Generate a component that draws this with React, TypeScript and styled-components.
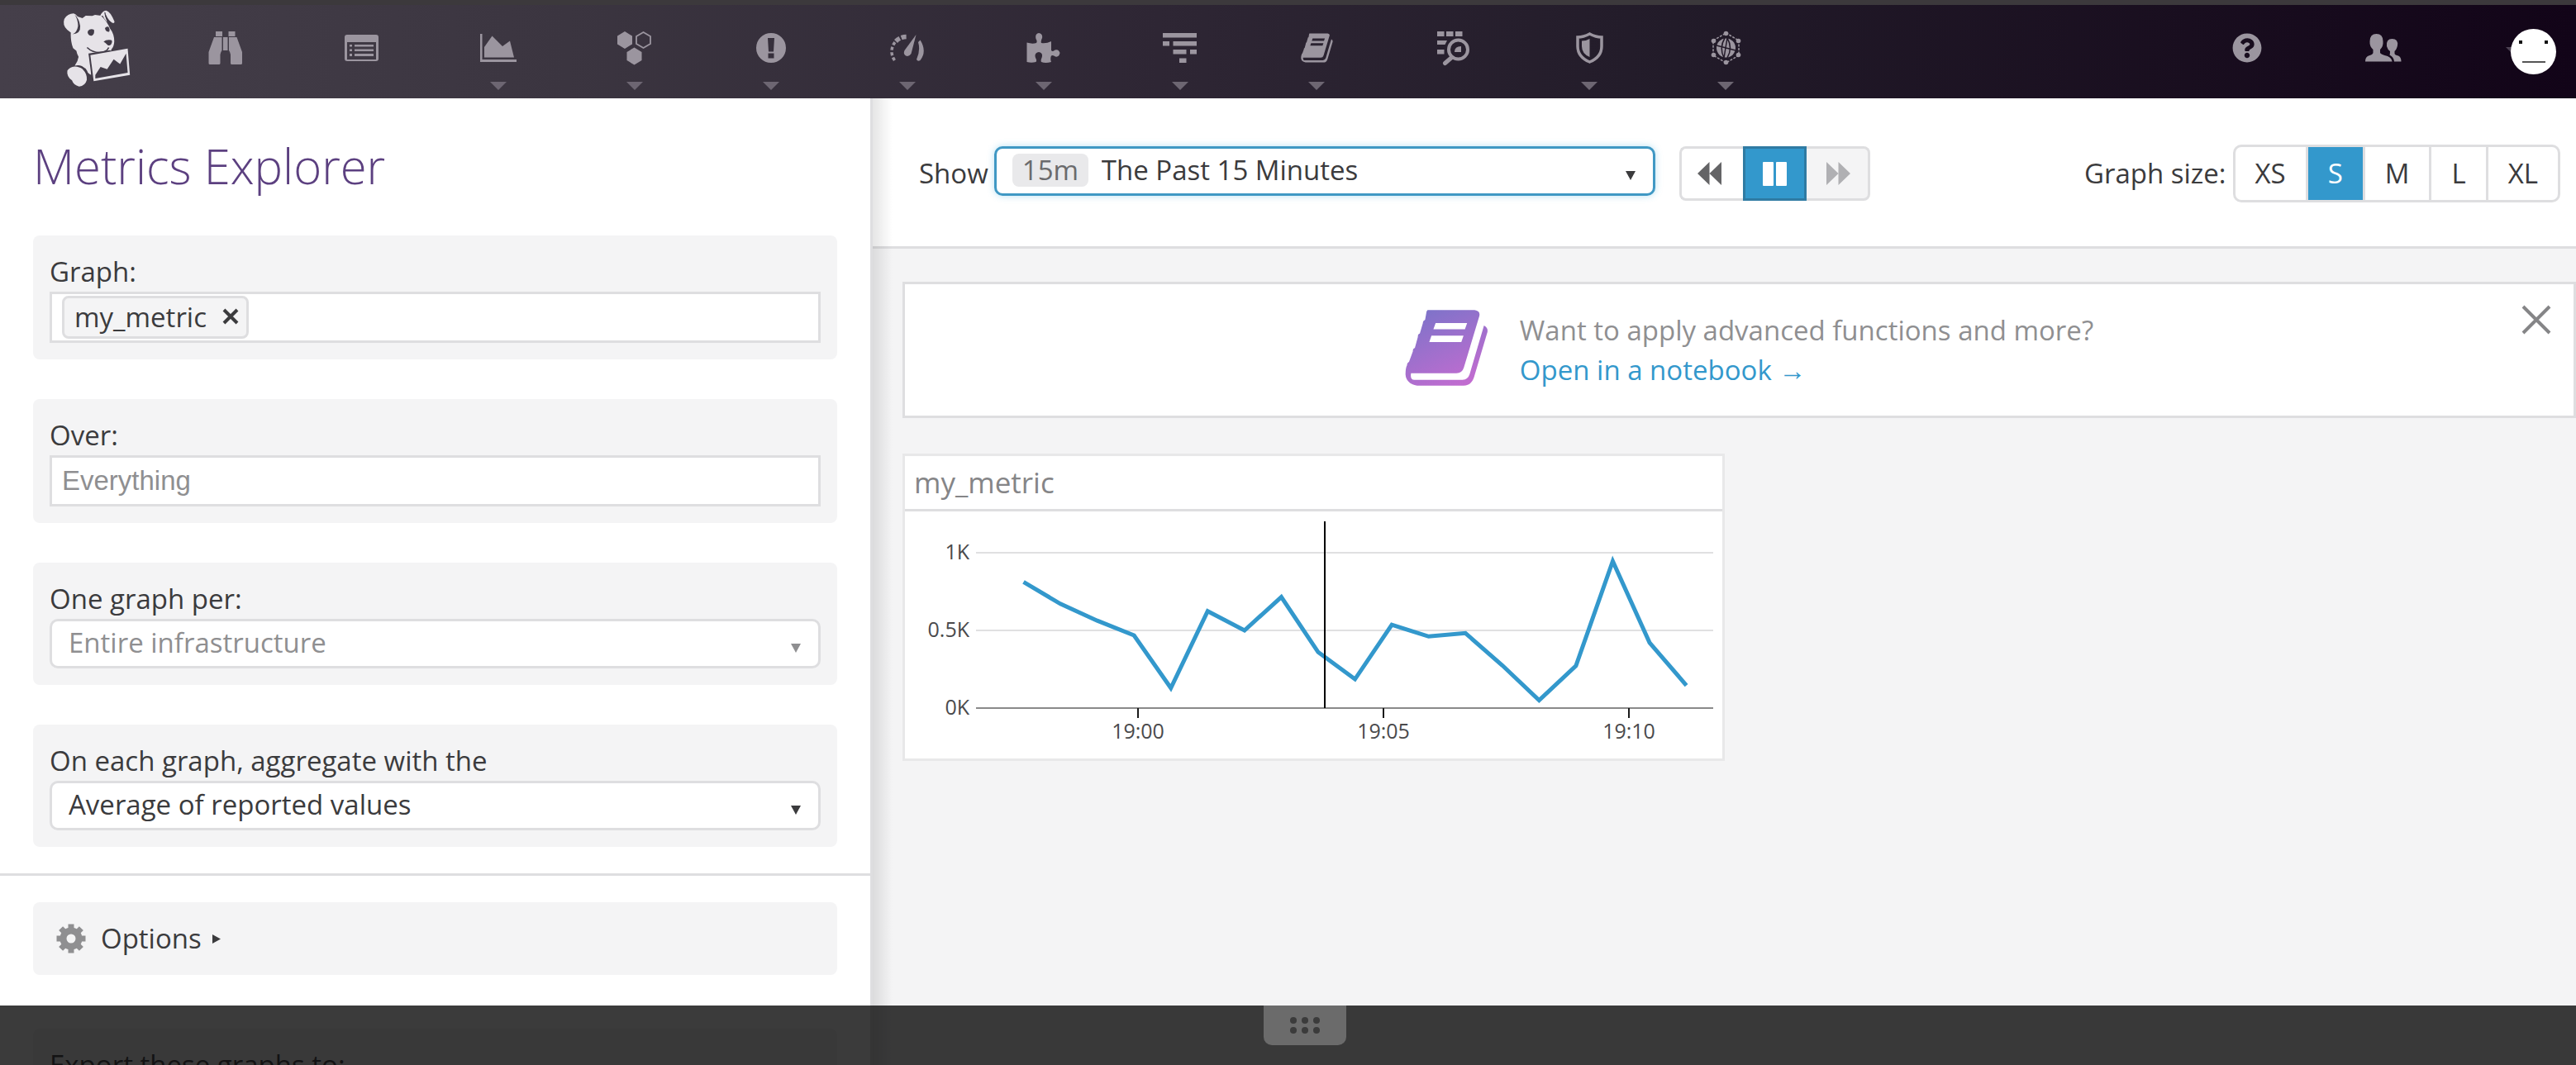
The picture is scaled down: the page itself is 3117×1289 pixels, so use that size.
import React, { useState } from 'react';
import styled, { createGlobalStyle, css } from 'styled-components';
import { FaQuestionCircle } from 'react-icons/fa';

const color = {
  text: '#3b3b3d',
  muted: '#8f8f91',
  line: '#dedee0',
  panel: '#f4f4f5',
  blue: '#3398cc',
  blueDark: '#2f7ba3',
  purple: '#5c4080',
  icon: '#9b959f',
  nav: '#423c48',
};

const GlobalStyle = createGlobalStyle`
  *, *::before, *::after { box-sizing: border-box; }
  body { margin: 0; }
  body, button, input, select {
    font-family: "Open Sans", "Noto Sans", sans-serif;
    font-size: 33px;
    line-height: 48px;
    color: ${color.text};
  }
  button { padding: 0; border: 0; background: none; cursor: pointer; }
  svg { display: block; }
`;

const Page = styled.div`
  display: flex;
  flex-direction: column;
  height: 100vh;
  overflow: hidden;
  background: ${color.panel};
`;

/* ---------- top navigation ---------- */

const Header = styled.header`
  display: flex;
  flex: none;
  align-items: flex-start;
  height: 119px;
  padding: 0 24px 0 76px;
  border-top: 6px solid #3c393c;
  background: linear-gradient(90deg, #453f4a 0%, #3b3540 22%, #2e2634 45%, #221b29 65%, #190e1f 85%, #120418 100%) border-box;
`;

const Logo = styled.a`
  margin: 6px 32px 0 0;
`;

const Nav = styled.nav`
  display: flex;
  flex: 1;
`;

const NavButton = styled.button`
  display: flex;
  flex-direction: column;
  align-items: center;
  gap: 19px;
  width: 165px;
  height: 113px;
  padding-top: 30px;
  color: ${color.icon};
`;

const NavCaret = styled.svg`
  fill: #6d6672;
`;

const Avatar = styled.button`
  margin: 29px 0 0 72px;
`;

const Icon = ({ children }: { children: React.ReactNode }) => (
  <svg width="44" height="44" viewBox="0 0 44 44" fill="currentColor" aria-hidden="true">{children}</svg>
);

const BinocularHalf = 'M8 9H17.5V25Q16 27 15.5 30V40.500Q15.500 42 14 42H3Q1.500 42 1.500 40.500V27Z';

const Binoculars = () => (
  <Icon>
    <path d="M10 2h8v6h-8zM25.500 2h8v6h-8zM19 9h5.500v16h-5.500z" />
    <path d={BinocularHalf} />
    <path d={BinocularHalf} transform="matrix(-1 0 0 1 43.500 0)" />
  </Icon>
);

const ListIcon = () => (
  <Icon>
    <path fillRule="evenodd" d="M4 6H39Q42 6 42 9V35Q42 38 39 38H4Q1 38 1 35V9Q1 6 4 6ZM4 15V36H39V15Z" />
    <path d="M7 18h3v2.500h-3zM13 18h23v2.500h-23zM7 23.500h3v2.500h-3zM13 23.500h23v2.500h-23zM7 29h3v3h-3zM13 29h23v3h-23z" />
  </Icon>
);

const AreaIcon = () => (
  <Icon>
    <path d="M0 5H2.500V36H44V39H0ZM5 33.500V21L14.500 7.500L27 20L36 13.500L41 33.500Z" />
  </Icon>
);

const HexIcon = () => (
  <Icon>
    <path d="M10 2L19 7.500V17.500L10 23L1 17.500V7.500ZM21.500 21.500L30.500 27V37L21.500 42.500L12.500 37V27Z" />
    <path d="M32.500 3L41 8V17L32.500 22L24 17V8Z" fill="none" stroke="currentColor" strokeWidth="1.800" />
  </Icon>
);

const AlertIcon = () => (
  <Icon>
    <path fillRule="evenodd" d="M22 4A18 18 0 1 0 22 40A18 18 0 1 0 22 4ZM18 10H26L25 26.500H19ZM18.500 28.500H25.500V34.500H18.500Z" />
  </Icon>
);

const GaugeIcon = () => (
  <Icon>
    <path d="M6.500 37A18 18 0 0 1 7 15" fill="none" stroke="currentColor" strokeWidth="3.500" strokeDasharray="4 2.500" />
    <path d="M8 14A18 18 0 0 1 22.500 8.500" fill="none" stroke="currentColor" strokeWidth="5.500" strokeDasharray="6 2" />
    <path d="M35 15L37.500 12.500Q46 26 37.500 37Q34.500 39 33 36Q38 25 35 15Z" />
    <path d="M32.500 6L26.500 29Q24 33 20 31.500Q16.500 29 18.500 25Z" />
  </Icon>
);

const PuzzleIcon = () => (
  <Icon>
    <path d="M1.500 15.500Q8 17.500 13 16Q14.500 14 12.500 11Q11 5 16 4Q21 5 20 10Q18 14 19 16Q25 17 31 14V25Q33 27 35.500 24.500Q40 23 41.500 28Q40.500 33.500 36 32.500Q33 30 31 31.500Q29.500 35 31 39Q24 41 19 39Q18 37 19.500 34Q21.500 28 16 27Q10 28 12 34Q14 37 12.500 39Q7 40.500 1.500 39Z" />
  </Icon>
);

const FilterIcon = () => (
  <Icon>
    <path d="M1 4h41v5.500h-41zM1 14h8v5.500h-8zM13.500 14h28.500v5.500h-28.500zM13.500 24h16v5.500h-16zM34 24h8v5.500h-8zM21 34.500h8.500v5.500h-8.500z" />
  </Icon>
);

const bookPath =
  'M112 31H282Q304 34 299 54L243 240Q237 260 216 260H52Q48 284 64 284H238Q258 283 264 264L316 87Q334 96 327 116L280 274Q270 305 242 305H74Q34 298 32 264Q32 240 38 230Q36 224 45 218L59 180Q57 172 66 168L77 128Q75 120 84 116L95 78Q94 70 103 66L108 38Q109 33 112 31ZM141 78L133 101H247L255 78ZM126 124L118 147H234L242 124Z';

const BookIcon = () => (
  <Icon>
    <svg x="3" y="4" width="39" height="36" viewBox="30 28 302 280" preserveAspectRatio="none">
      <path fillRule="evenodd" d={bookPath} />
    </svg>
  </Icon>
);

const LogSearchIcon = () => (
  <Icon>
    <path d="M3 2h8.500v6h-8.500zM14 2h8.500v6h-8.500zM25 2h8.500v6h-8.500zM3 13h12l-2.500 5h-9.500zM3 24h8.500v5.500h-8.500z" />
    <circle cx="28.500" cy="24" r="11.500" fill="none" stroke="currentColor" strokeWidth="4" />
    <path d="M20 34L12.500 40.500" stroke="currentColor" strokeWidth="5" strokeLinecap="round" />
    <path d="M24 27Q24 20 32 20V27Z" />
  </Icon>
);

const ShieldIcon = () => (
  <Icon>
    <path d="M22.500 5Q30 9 37 9V20Q37 33 22.500 39Q8 33 8 20V9Q15 9 22.500 5Z" fill="none" stroke="currentColor" strokeWidth="3.500" />
    <path d="M22.500 11V33Q13 29 13 20V13.500Q18 13.500 22.500 11Z" />
  </Icon>
);

const GlobeIcon = () => (
  <Icon>
    <path d="M22.500 4L38 13V31L22.500 40L7 31V13Z" fill="none" stroke="currentColor" strokeWidth="1.500" strokeDasharray="3 1.500" />
    <circle cx="22.500" cy="4.500" r="2.800" />
    <circle cx="37.500" cy="13.500" r="2.800" />
    <circle cx="37.500" cy="30.500" r="2.800" />
    <circle cx="22.500" cy="39.500" r="2.800" />
    <circle cx="7.500" cy="30.500" r="2.800" />
    <circle cx="7.500" cy="13.500" r="2.800" />
    <circle cx="22.500" cy="22" r="11.500" />
    <path d="M21 10Q14 22 20 34M24 10Q31 22 24 34M24 10L20 34M11 19L34 25" fill="none" stroke="#231a29" strokeWidth="1.500" />
  </Icon>
);

const UsersIcon = () => (
  <Icon>
    <path d="M26 20Q25 11 32.500 11Q40 11 39 19Q38 24 35.500 26V29Q36 30.500 40 31.500Q43.500 33 43.500 38.500H35Q34.500 33 29.500 30.500Q30 29 30 26Q27 24 26 20Z" />
    <path d="M5.500 14Q5.500 5 13.500 5Q21.500 5 21.500 14Q22 20 18 24V28Q19 30 27 32Q32 34 32.500 38.500H0Q0 33 4 31.500Q9 30 9.500 28V24Q5 20 5.500 14Z" />
  </Icon>
);

const DogLogo = () => (
  <svg width="82" height="93" viewBox="33 25 246 280" fill="#e6e3e8" role="img" aria-label="Datadog">
    <path d="M84 48L104 55L116 46L140 47L150 43L172 46Q196 70 204 92Q220 112 220 140Q219 158 210 168L205 182L136 190V262Q122 256 114 240Q100 222 76 228Q88 212 90 196Q84 186 82 174L70 164L66 152Q60 130 62 100Z" />
    <path d="M38 58Q50 38 72 38Q88 42 94 72Q98 94 88 106Q76 116 60 106Q34 90 36 68Z" />
    <path d="M76 42Q92 56 96 84Q98 112 68 114Q84 108 88 84Q88 60 76 42Z" fill={color.nav} />
    <path d="M168 48Q176 28 190 27Q206 30 221 68Q220 76 211 71Q202 66 196 56Q188 42 186 32Q186 50 194 70Q184 60 178 46Z" />
    <path d="M186 32Q190 54 208 70L203 78Q188 60 184 36Z" fill={color.nav} />
    <path d="M124 102Q132 92 146 97Q150 112 138 119Q126 120 123 108Z" fill={color.nav} />
    <path d="M186 91Q192 84 199 87Q206 98 201 105Q192 106 188 98Z" fill={color.nav} />
    <path d="M181 141Q190 132 209 135Q215 138 209 150Q202 158 195 152Q188 145 181 141Z" fill={color.nav} />
    <path d="M121 162Q140 180 166 180Q192 180 200 162" fill="none" stroke={color.nav} strokeWidth="5" />
    <path d="M82 229Q118 226 127 262L118 270Q110 236 82 229Z" fill={color.nav} />
    <path d="M49 246Q58 232 76 231Q94 232 104 240Q122 258 120 280Q114 302 92 304Q72 300 66 282Q46 268 49 246Z" />
    <path d="M126 184L205 172L277 262L140 290Z" fill={color.nav} />
    <path d="M133 190L269 166L277 262L145 285Z" />
    <path d="M151 275L151 262L170 233L194 241L218 205L241 222L263 184L269 254Z" fill={color.nav} />
  </svg>
);

const navItems = [
  { name: 'Watchdog', icon: Binoculars, menu: false },
  { name: 'Events', icon: ListIcon, menu: false },
  { name: 'Dashboards', icon: AreaIcon, menu: true },
  { name: 'Infrastructure', icon: HexIcon, menu: true },
  { name: 'Monitors', icon: AlertIcon, menu: true },
  { name: 'Metrics', icon: GaugeIcon, menu: true },
  { name: 'Integrations', icon: PuzzleIcon, menu: true },
  { name: 'APM', icon: FilterIcon, menu: true },
  { name: 'Notebooks', icon: BookIcon, menu: true },
  { name: 'Logs', icon: LogSearchIcon, menu: false },
  { name: 'Security', icon: ShieldIcon, menu: true },
  { name: 'Synthetics', icon: GlobeIcon, menu: true },
];

/* ---------- sidebar ---------- */

const Body = styled.div`
  display: grid;
  flex: 1;
  grid-template-columns: 1056px minmax(0, 1fr);
  min-height: 0;
`;

const Sidebar = styled.aside`
  display: flex;
  flex-direction: column;
  overflow: hidden;
  border-right: 3px solid ${color.line};
  background: #fff;
`;

const Title = styled.h1`
  margin: 42px 40px 44px;
  font-size: 58px;
  font-weight: 300;
  line-height: 80px;
  color: ${color.purple};
`;

const Fields = styled.form`
  display: flex;
  flex-direction: column;
  gap: 48px;
  padding: 0 40px 32px;
  border-bottom: 3px solid ${color.line};
`;

const Actions = styled.div`
  display: flex;
  flex-direction: column;
  gap: 65px;
  padding: 32px 40px;
`;

const Panel = styled.section`
  padding: 20px;
  border-radius: 8px;
  background: ${color.panel};
`;

const FieldLabel = styled.label`
  display: block;
`;

const fieldBox = css`
  width: 100%;
  height: 62px;
  border: 3px solid ${color.line};
  background: #fff;
`;

const TagBox = styled.div`
  ${fieldBox}
  display: flex;
  align-items: center;
  gap: 8px;
  padding: 0 12px;
`;

const Tag = styled.span`
  display: flex;
  align-items: center;
  gap: 18px;
  height: 52px;
  padding: 0 8px 0 12px;
  border: 3px solid ${color.line};
  border-radius: 8px;
  background: ${color.panel};
`;

const TagInput = styled.input`
  flex: 1;
  min-width: 0;
  border: 0;
  outline: 0;
  background: none;
`;

const TextInput = styled.input`
  ${fieldBox}
  padding: 0 12px;
  font-family: "Liberation Sans", Arial, sans-serif;
  &::placeholder { color: ${color.muted}; }
`;

const SelectWrap = styled.div<{ $wide?: boolean; $tone?: string }>`
  position: relative;
  ${p => p.$wide && 'flex: 0 1 800px; margin: 0 29px 6px 7px;'}
  color: ${p => p.$tone || color.text};
`;

const Select = styled.select<{ $focused?: boolean }>`
  display: block;
  width: 100%;
  height: 60px;
  padding: 0 60px 2px ${p => (p.$focused ? 127 : 20)}px;
  border: 3px solid ${p => (p.$focused ? '#4098c4' : color.line)};
  border-radius: 10px;
  outline: 0;
  appearance: none;
  background: #fff;
  color: inherit;
  ${p => p.$focused && 'box-shadow: 0 0 8px rgba(51, 170, 220, 0.35);'}
`;

const Arrow = styled.svg`
  position: absolute;
  right: 24px;
  top: 30px;
  fill: currentColor;
  pointer-events: none;
`;

const RangeBadge = styled.span`
  position: absolute;
  left: 22px;
  top: 9px;
  padding: 0 12px;
  border-radius: 8px;
  background: #e9e9eb;
  color: #6b6b6d;
  line-height: 40px;
  pointer-events: none;
`;

const OptionsButton = styled.button`
  display: flex;
  align-items: center;
  padding-left: 8px;
  gap: 18px;
`;

const OptionsText = styled.span`
  display: flex;
  align-items: center;
  gap: 13px;
`;

/* ---------- main column ---------- */

const Main = styled.main`
  position: relative;
  &::before {
    content: "";
    position: absolute;
    inset: 0 auto 0 0;
    width: 24px;
    background: linear-gradient(90deg, rgba(0, 0, 0, 0.1), rgba(0, 0, 0, 0));
  }
`;

const Toolbar = styled.div`
  display: flex;
  align-items: center;
  padding: 56px 19px 53px 56px;
  border-bottom: 3px solid ${color.line};
  background: #fff;
`;

const Playback = styled.div`
  display: flex;
  height: 66px;
  margin-right: auto;
`;

const PlayButton = styled.button<{ $active?: boolean }>`
  display: flex;
  align-items: center;
  justify-content: center;
  width: 77px;
  border: 3px solid ${p => (p.$active ? color.blueDark : color.line)};
  background: ${p => (p.$active ? color.blue : '#fff')};
  color: ${p => (p.$active ? '#fff' : '#646466')};
  &:first-child { border-radius: 8px 0 0 8px; border-right-width: 0; padding-right: 6px; }
  &:last-child { border-radius: 0 8px 8px 0; border-left-width: 0; padding-left: 4px; }
  &:disabled { background: ${color.panel}; color: #b0b0b3; }
`;

const SizeGroup = styled.div`
  display: flex;
  gap: 3px;
  height: 70px;
  margin-left: 8px;
  border: 3px solid ${color.line};
  border-radius: 10px;
  background: ${color.line};
  overflow: hidden;
`;

const SizeButton = styled.button<{ $active: boolean }>`
  padding: 0 24px;
  background: ${p => (p.$active ? color.blue : '#fff')};
  color: ${p => (p.$active ? '#fff' : color.text)};
`;

const Content = styled.div`
  display: flex;
  flex-direction: column;
  gap: 43px;
  padding: 40px 0 0 36px;
`;

const Banner = styled.section`
  position: relative;
  display: flex;
  align-items: center;
  justify-content: center;
  gap: 38px;
  height: 165px;
  padding-left: 24px;
  border: 3px solid ${color.line};
  background: #fff;
`;

const BookArt = styled.svg`
  margin-bottom: 6px;
`;

const BannerText = styled.p`
  display: flex;
  flex-direction: column;
  margin: 0;
  color: ${color.muted};
`;

const BannerLink = styled.a`
  color: ${color.blue};
  text-decoration: none;
`;

const CloseButton = styled.button`
  position: absolute;
  right: 27px;
  top: 25px;
`;

const Card = styled.section`
  width: 995px;
  max-width: 100%;
  border: 3px solid #e8e8e9;
  background: #fff;
`;

const CardTitle = styled.h2`
  margin: 0;
  padding: 8px 11px;
  border-bottom: 3px solid ${color.line};
  font-size: 35px;
  font-weight: 400;
  line-height: 48px;
  color: #858587;
`;

const ChartSvg = styled.svg`
  width: 100%;
  height: auto;
  text {
    font-family: "Open Sans", "Noto Sans", sans-serif;
    font-size: 25px;
    fill: #4a4a4c;
  }
`;

const Drawer = styled.div`
  position: fixed;
  inset: auto 0 0 0;
  display: flex;
  align-items: flex-start;
  justify-content: center;
  height: 72px;
  background: rgba(10, 10, 10, 0.8);
`;

const Handle = styled.button`
  display: flex;
  align-items: center;
  justify-content: center;
  width: 100px;
  height: 48px;
  margin-left: 41px;
  border-radius: 0 0 10px 10px;
  background: #6b6b6b;
`;

/* Metric values, evenly spaced in time, on a scale where 1000 is the 1K line. */
const values = [812, 671, 563, 468, 129, 624, 500, 715, 360, 186, 536, 461, 482, 275, 50, 272, 946, 421, 146];
const yOf = (v: number) => 238 - v * 0.188;
const points = values.map((v, i) => `${143.500 + i * 44.560},${yOf(v)}`).join(' ');

const Chart = () => (
  <ChartSvg viewBox="0 0 989 299" role="img" aria-label="my_metric over the past 15 minutes">
    {[['1K', 1000], ['0.5K', 500], ['0K', 0]].map(([label, v]) => (
      <g key={label}>
        <line x1="86" x2="978" y1={yOf(Number(v))} y2={yOf(Number(v))} stroke={v === 0 ? '#8a8a8a' : '#e0e0e1'} strokeWidth="2" />
        <text x="78" y={yOf(Number(v)) + 8} textAnchor="end">{label}</text>
      </g>
    ))}
    {['19:00', '19:05', '19:10'].map((label, i) => (
      <g key={label}>
        <line x1={282 + i * 297} x2={282 + i * 297} y1="238" y2="250" stroke="#1a1a1a" strokeWidth="2" />
        <text x={282 + i * 297} y="275" textAnchor="middle">{label}</text>
      </g>
    ))}
    <polyline points={points} fill="none" stroke={color.blue} strokeWidth="5" strokeMiterlimit="3" />
    <line x1="508" x2="508" y1="12" y2="238" stroke="#000" strokeWidth="2" />
  </ChartSvg>
);

const DownArrow = () => (
  <Arrow width="12" height="11" viewBox="0 0 12 11" aria-hidden="true"><path d="M0 0H12L6 11Z" /></Arrow>
);

export default function App() {
  const [size, setSize] = useState('S');
  return (
    <Page>
      <GlobalStyle />
      <Header>
        <Logo href="#" aria-label="Home"><DogLogo /></Logo>
        <Nav>
          {navItems.map(({ name, icon: Glyph, menu }) => (
            <NavButton key={name} aria-label={name}>
              <Glyph />
              {menu && <NavCaret width="20" height="10" viewBox="0 0 20 10"><path d="M0 0H20L10 10Z" /></NavCaret>}
            </NavButton>
          ))}
        </Nav>
        <NavButton aria-label="Help">
          <Icon><FaQuestionCircle x="4" y="4" size={36} /></Icon>
        </NavButton>
        <NavButton aria-label="Team"><UsersIcon /></NavButton>
        <Avatar aria-label="Account">
          <svg width="55" height="55" viewBox="0 0 55 55" overflow="visible">
            <path d="M-6 22H14L4 32Z" fill="#4d4253" />
            <circle cx="27.500" cy="27.500" r="27.500" fill="#fff" />
            <path d="M10 14h4v4h-4zM41 14h4v4h-4z" fill="#111" />
            <path d="M14 40H42" stroke="#555" strokeWidth="2" />
          </svg>
        </Avatar>
      </Header>

      <Body>
        <Sidebar>
          <Title>Metrics Explorer</Title>
          <Fields>
            <Panel>
              <FieldLabel htmlFor="graph">Graph:</FieldLabel>
              <TagBox>
                <Tag>
                  my_metric
                  <button type="button" aria-label="Remove my_metric">
                    <svg width="22" height="22" viewBox="0 0 22 22"><path d="M3 2L19 18M19 2L3 18" stroke={color.text} strokeWidth="4" /></svg>
                  </button>
                </Tag>
                <TagInput id="graph" />
              </TagBox>
            </Panel>
            <Panel>
              <FieldLabel htmlFor="over">Over:</FieldLabel>
              <TextInput id="over" placeholder="Everything" />
            </Panel>
            <Panel>
              <FieldLabel htmlFor="per">One graph per:</FieldLabel>
              <SelectWrap $tone={color.muted}>
                <Select id="per"><option>Entire infrastructure</option></Select>
                <DownArrow />
              </SelectWrap>
            </Panel>
            <Panel>
              <FieldLabel htmlFor="aggregate">On each graph, aggregate with the</FieldLabel>
              <SelectWrap>
                <Select id="aggregate"><option>Average of reported values</option></Select>
                <DownArrow />
              </SelectWrap>
            </Panel>
          </Fields>
          <Actions>
            <Panel>
              <OptionsButton>
                <svg width="36" height="36" viewBox="0 0 36 36" fill="none" stroke={color.muted}>
                  <circle cx="18" cy="18" r="9.500" strokeWidth="8" />
                  {[0, 45, 90, 135].map(a => (
                    <path key={a} d="M18 0.500V6M18 30V35.500" strokeWidth="7" transform={`rotate(${a} 18 18)`} />
                  ))}
                </svg>
                <OptionsText>
                  Options
                  <svg width="10" height="11" viewBox="0 0 10 11"><path d="M0 0L10 5.500L0 11Z" fill={color.text} /></svg>
                </OptionsText>
              </OptionsButton>
            </Panel>
            <Panel>Export these graphs to:</Panel>
          </Actions>
        </Sidebar>

        <Main>
          <Toolbar>
            <label htmlFor="range">Show</label>
            <SelectWrap $wide>
              <Select id="range" $focused><option>The Past 15 Minutes</option></Select>
              <RangeBadge>15m</RangeBadge>
              <DownArrow />
            </SelectWrap>
            <Playback>
              <PlayButton aria-label="Back">
                <svg width="29" height="28" viewBox="0 0 29 28" fill="currentColor"><path d="M14.500 0V28L0 14ZM29 0V28L14.500 14Z" /></svg>
              </PlayButton>
              <PlayButton $active aria-label="Pause">
                <svg width="29" height="29" viewBox="0 0 29 29" fill="currentColor"><rect width="13" height="29" rx="1" /><rect x="16" width="13" height="29" rx="1" /></svg>
              </PlayButton>
              <PlayButton disabled aria-label="Forward">
                <svg width="29" height="28" viewBox="0 0 29 28" fill="currentColor"><path d="M0 0V28L14.500 14ZM14.500 0V28L29 14Z" /></svg>
              </PlayButton>
            </Playback>
            <span id="size-label">Graph size:</span>
            <SizeGroup role="group" aria-labelledby="size-label">
              {['XS', 'S', 'M', 'L', 'XL'].map(s => (
                <SizeButton key={s} $active={s === size} aria-pressed={s === size} onClick={() => setSize(s)}>{s}</SizeButton>
              ))}
            </SizeGroup>
          </Toolbar>

          <Content>
            <Banner>
              <BookArt width="101" height="94" viewBox="30 28 302 280" aria-hidden="true">
                <linearGradient id="cover" x1="0.200" y1="0" x2="0.700" y2="1">
                  <stop offset="0" stopColor="#7d73c9" />
                  <stop offset="1" stopColor="#c26cd0" />
                </linearGradient>
                <path fillRule="evenodd" d={bookPath} fill="url(#cover)" />
              </BookArt>
              <BannerText>
                <span>Want to apply advanced functions and more?</span>
                <BannerLink href="#">Open in a notebook →</BannerLink>
              </BannerText>
              <CloseButton aria-label="Dismiss">
                <svg width="36" height="36" viewBox="0 0 36 36"><path d="M2 2L34 34M34 2L2 34" stroke="#858587" strokeWidth="4" /></svg>
              </CloseButton>
            </Banner>
            <Card>
              <CardTitle>my_metric</CardTitle>
              <Chart />
            </Card>
          </Content>
        </Main>
      </Body>

      <Drawer>
        <Handle aria-label="Resize drawer">
          <svg width="36" height="22" viewBox="0 0 36 22" fill="#3b3b3b">
            {[4, 18, 32].map(x => [5, 17].map(y => <circle key={`${x}-${y}`} cx={x} cy={y} r="4" />))}
          </svg>
        </Handle>
      </Drawer>
    </Page>
  );
}
